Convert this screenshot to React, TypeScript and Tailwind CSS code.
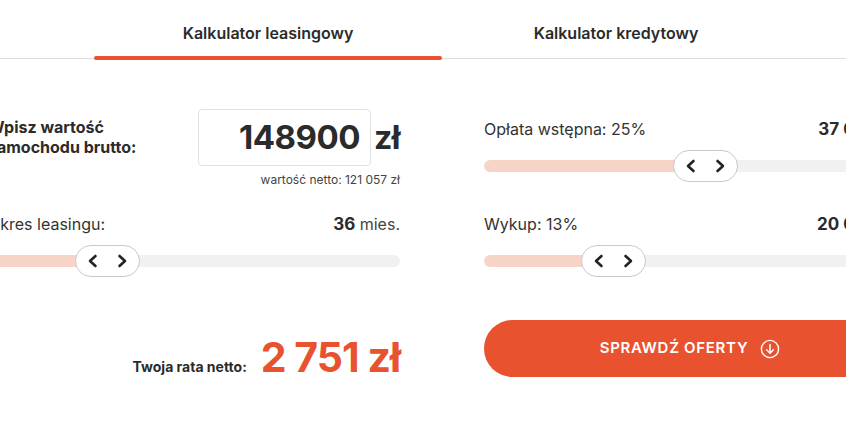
import { useState } from "react";

const ORANGE = "bg-[#e8522f]";

function Chevron({ dir }: { dir: "left" | "right" }) {
  return (
    <svg width="12" height="14" viewBox="0 0 12 14" fill="none" aria-hidden="true">
      <path
        d={dir === "left" ? "M8.5 2 L3 7 L8.5 12" : "M3.5 2 L9 7 L3.5 12"}
        stroke="#222"
        strokeWidth="2.6"
        strokeLinecap="round"
        strokeLinejoin="round"
      />
    </svg>
  );
}

function Slider({ offset }: { offset: number }) {
  return (
    <div className="relative h-[32px] flex items-center">
      <div className="relative h-[12px] w-full rounded-full bg-[#f1f1f1] overflow-hidden">
        <div className="h-full rounded-full bg-[#f8d3c8]" style={{ width: offset + 32 }} />
      </div>
      <div
        className="absolute top-0 h-[32px] w-[65px] rounded-full border border-[#c9c9c9] bg-white flex items-center justify-center gap-[17px]"
        style={{ left: offset }}
      >
        <Chevron dir="left" />
        <Chevron dir="right" />
      </div>
    </div>
  );
}

function Tab({ label, active, onClick }: { label: string; active: boolean; onClick: () => void }) {
  return (
    <button
      onClick={onClick}
      className="relative h-full w-[348px] pt-[8px] flex items-center justify-center text-[16px] font-semibold text-[#2b2b2b]"
    >
      {label}
      {active && (
        <span className="absolute left-0 right-0 bottom-[-2px] h-[4px] rounded-full bg-[#e8522f]" />
      )}
    </button>
  );
}

export default function App() {
  const [tab, setTab] = useState(0);

  return (
    <div
      className="w-[846px] h-[423px] overflow-hidden bg-white text-[#2b2b2b]"
      style={{ fontFamily: "Inter, 'Open Sans', sans-serif" }}
    >
      <div className="h-[59px] border-b border-[#dcdcdc] flex pl-[94px]">
        <Tab label="Kalkulator leasingowy" active={tab === 0} onClick={() => setTab(0)} />
        <Tab label="Kalkulator kredytowy" active={tab === 1} onClick={() => setTab(1)} />
      </div>

      <div className="ml-[-12px] w-[908px] grid grid-cols-2 gap-x-[84px]">
        {/* left column */}
        <div className="flex flex-col">
          <div className="mt-[50px] flex justify-between items-start">
            <p className="mt-[8px] text-[16px] leading-[20px] font-bold text-[#2b2b2b]">
              Wpisz wartość
              <br />
              samochodu brutto:
            </p>
            <div className="flex items-center gap-[3px]">
              <div className="h-[57px] w-[173px] rounded-[4px] border border-[#e1e1e1] flex items-center justify-end pr-[10px] text-[33px] font-bold tracking-[-0.5px]">
                148900
              </div>
              <span className="text-[32px] font-bold tracking-[-0.5px]">zł</span>
            </div>
          </div>
          <p className="mt-[7px] text-right text-[12px] leading-[14px] text-[#444]">
            wartość netto: 121 057 zł
          </p>

          <div className="mt-[26px] flex justify-between items-baseline text-[16px] leading-[22px]">
            <span className="text-[#333]">Okres leasingu:</span>
            <span className="text-[#444]">
              <b className="text-[17px] font-bold text-[#2b2b2b]">36</b> mies.
            </span>
          </div>
          <div className="mt-[10px]">
            <Slider offset={87} />
          </div>

          <div className="mt-[60px] flex justify-end items-baseline gap-[14px]">
            <span className="text-[14px] font-bold text-[#2b2b2b]">Twoja rata netto:</span>
            <span className="text-[41px] leading-none font-bold tracking-[-1px] text-[#e8522f]">
              2 751 zł
            </span>
          </div>
        </div>

        {/* right column */}
        <div className="flex flex-col">
          <div className="mt-[59px] flex justify-between items-baseline text-[16px] leading-[22px]">
            <span className="text-[#333]">Opłata wstępna: 25%</span>
            <span className="text-[17px] font-bold">37 000 zł</span>
          </div>
          <div className="mt-[10px]">
            <Slider offset={189} />
          </div>

          <div className="mt-[31px] flex justify-between items-baseline text-[16px] leading-[22px]">
            <span className="text-[#333]">Wykup: 13%</span>
            <span className="text-[17px] font-bold">20 000 zł</span>
          </div>
          <div className="mt-[10px]">
            <Slider offset={97} />
          </div>

          <button
            className={`mt-[43px] h-[57px] w-full rounded-full ${ORANGE} flex items-center justify-center gap-[12px] text-white text-[15px] font-semibold tracking-[0.7px]`}
          >
            SPRAWDŹ OFERTY
            <svg width="20" height="20" viewBox="0 0 20 20" fill="none" aria-hidden="true">
              <circle cx="10" cy="10" r="8.6" stroke="white" strokeWidth="1.4" />
              <path
                d="M10 5.5 V14 M6.6 10.8 L10 14.2 L13.4 10.8"
                stroke="white"
                strokeWidth="1.5"
                strokeLinecap="round"
                strokeLinejoin="round"
              />
            </svg>
          </button>
        </div>
      </div>
    </div>
  );
}
